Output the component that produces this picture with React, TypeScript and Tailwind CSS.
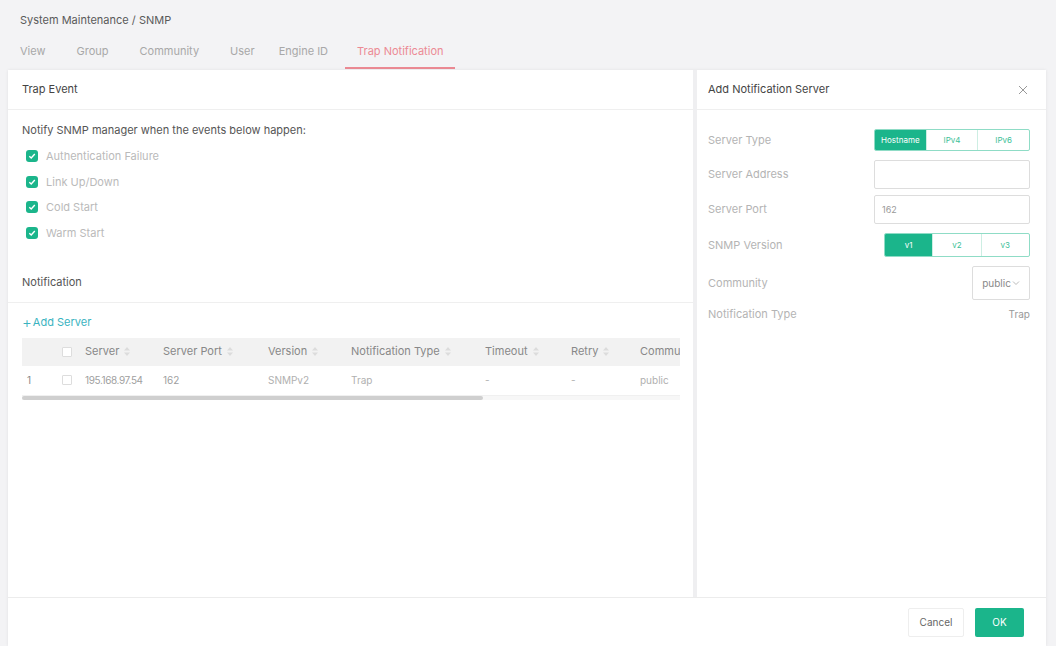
import React from 'react';

const tabs = ['View', 'Group', 'Community', 'User', 'Engine ID', 'Trap Notification'];
const tabGap = ['mr-[31px]', 'mr-[31px]', 'mr-[31px]', 'mr-[24px]', 'mr-[29px]'];
const events = ['Authentication Failure', 'Link Up/Down', 'Cold Start', 'Warm Start'];

const cols = [
  { name: 'Server', w: 'w-[78px]' },
  { name: 'Server Port', w: 'w-[105px]' },
  { name: 'Version', w: 'w-[83px]' },
  { name: 'Notification Type', w: 'w-[134px]' },
  { name: 'Timeout', w: 'w-[86px]' },
  { name: 'Retry', w: 'w-[69px]' },
];

const SortIcon = () => (
  <svg width="6" height="9" viewBox="0 0 6 9" className="ml-[5px] text-[#dcdcdc]">
    <path d="M3 0L6 3.5H0Z" fill="currentColor" />
    <path d="M3 9L0 5.5H6Z" fill="currentColor" />
  </svg>
);

const Check = () => (
  <span className="w-[12px] h-[12px] rounded-[3px] bg-[#1bb58b] flex items-center justify-center">
    <svg width="8" height="8" viewBox="0 0 8 8">
      <path d="M1.3 4.2L3.2 6L6.8 2" stroke="white" strokeWidth="1.4" fill="none" />
    </svg>
  </span>
);

const Segmented = ({ items, w, h }: { items: string[]; w: string; h: string }) => (
  <div className={`flex ${h} ${w} border border-[#8fdcc6] rounded-[2px] overflow-hidden`}>
    {items.map((it, i) => (
      <div
        key={it}
        className={`flex-1 flex items-center justify-center text-[8px] ${i === 0 ? 'bg-[#1bb58b] text-white' : 'text-[#3cbf98] border-l border-[#cdeee3]'}`}
      >
        {it}
      </div>
    ))}
  </div>
);

const FormRow = ({ label, children, h }: { label: string; children?: React.ReactNode; h: string }) => (
  <div className={`flex items-center justify-between ${h}`}>
    <span className="text-[11px] text-[#b4b4b4]">{label}</span>
    {children}
  </div>
);

export default function App() {
  return (
    <div className="w-[1056px] h-[646px] bg-[#f3f3f5] flex flex-col text-[#555]" style={{ fontFamily: 'Inter, "Liberation Sans", sans-serif' }}>
      <div className="h-[70px] px-[20px] pt-[12px]">
        <div className="text-[11px] text-[#5a5a5a] leading-[16px]">System Maintenance / SNMP</div>
        <div className="flex mt-[16px] text-[11px] text-[#a8a8a8] leading-[14px]">
          {tabs.map((t, i) => (
            <div
              key={t}
              className={`pb-[9px] ${i === 5 ? 'text-[#ec8a94] border-b-2 border-[#ec8a94] px-[12px] -ml-[12px]' : tabGap[i]}`}
            >
              {t}
            </div>
          ))}
        </div>
      </div>

      <div className="flex-1 ml-[8px] mr-[10px] bg-white flex flex-col shadow-[0_0_3px_rgba(0,0,0,0.08)]">
        <div className="flex-1 flex">
          {/* left */}
          <div className="w-[685px] flex flex-col">
            <div className="h-[40px] flex items-center px-[14px] text-[11px] text-[#444] border-b border-[#efefef]">Trap Event</div>
            <div className="px-[14px] pt-[12px]">
              <div className="text-[11px] text-[#555]">Notify SNMP manager when the events below happen:</div>
              <div className="mt-[5px] flex flex-col">
                {events.map((e) => (
                  <div key={e} className="flex items-center h-[25.5px] gap-[8px] pl-[4px]">
                    <Check />
                    <span className="text-[11px] text-[#bababa]">{e}</span>
                  </div>
                ))}
              </div>
            </div>
            <div className="mt-[17px] h-[40px] flex items-center px-[14px] text-[11px] text-[#555] border-b border-[#efefef]">Notification</div>
            <div className="px-[14px] pt-[12px]">
              <div className="text-[11px] text-[#3ab3bf] flex items-center h-[16px]">
                <span className="text-[15px] leading-none mr-[1px] font-light">+</span>Add Server
              </div>
              <div className="mt-[7px] w-[658px] overflow-hidden">
                <div className="flex h-[28px] items-center bg-[#f2f2f2] text-[11px] text-[#888]">
                  <div className="w-[40px] shrink-0" />
                  <div className="w-[23px] shrink-0 flex">
                    <span className="w-[10px] h-[10px] border border-[#ddd] bg-white rounded-[1px]" />
                  </div>
                  {cols.map((c) => (
                    <div key={c.name} className={`${c.w} flex items-center shrink-0 whitespace-nowrap`}>
                      {c.name}
                      <SortIcon />
                    </div>
                  ))}
                  <div className="shrink-0 whitespace-nowrap">Community</div>
                </div>
                <div className="flex h-[30px] items-center text-[10px] text-[#b0b0b0] border-b border-[#f0f0f0]">
                  <div className="w-[40px] shrink-0 pl-[5px] text-[#888]">1</div>
                  <div className="w-[23px] shrink-0 flex">
                    <span className="w-[10px] h-[10px] border border-[#ddd] bg-white rounded-[1px]" />
                  </div>
                  <div className="w-[78px] shrink-0 text-[#a0a0a0] tracking-[-0.4px]">195.168.97.54</div>
                  <div className="w-[105px] shrink-0 text-[#a0a0a0]">162</div>
                  <div className="w-[83px] shrink-0">SNMPv2</div>
                  <div className="w-[134px] shrink-0">Trap</div>
                  <div className="w-[86px] shrink-0">-</div>
                  <div className="w-[69px] shrink-0">-</div>
                  <div className="shrink-0">public</div>
                </div>
                <div className="h-[4px] bg-[#f7f7f7]">
                  <div className="w-[461px] h-[4px] bg-[#cfcfcf] rounded-[2px]" />
                </div>
              </div>
            </div>
          </div>

          <div className="w-[4px] bg-[#efeff1]" />

          {/* right */}
          <div className="flex-1 flex flex-col">
            <div className="h-[40px] flex items-center justify-between pl-[11px] pr-[16px] border-b border-[#efefef]">
              <span className="text-[11px] text-[#444]">Add Notification Server</span>
              <svg width="10" height="10" viewBox="0 0 10 10" className="mr-[2px]">
                <path d="M1 1L9 9M9 1L1 9" stroke="#999" strokeWidth="1" />
              </svg>
            </div>
            <div className="pl-[11px] pr-[16px] pt-[19px] flex flex-col">
              <FormRow label="Server Type" h="h-[22px]">
                <Segmented items={['Hostname', 'IPv4', 'IPv6']} w="w-[156px]" h="h-[22px]" />
              </FormRow>
              <FormRow label="Server Address" h="h-[29px] mt-[9px]">
                <div className="w-[156px] h-[29px] border border-[#ddd] rounded-[2px]" />
              </FormRow>
              <FormRow label="Server Port" h="h-[29px] mt-[6px]">
                <div className="w-[156px] h-[29px] border border-[#ddd] rounded-[2px] flex items-center px-[7px] text-[9px] text-[#999]">162</div>
              </FormRow>
              <FormRow label="SNMP Version" h="h-[24px] mt-[9px]">
                <Segmented items={['v1', 'v2', 'v3']} w="w-[146px]" h="h-[24px]" />
              </FormRow>
              <FormRow label="Community" h="h-[34px] mt-[9px]">
                <div className="w-[58px] h-[34px] border border-[#ddd] rounded-[2px] flex items-center justify-center text-[10px] text-[#888]">
                  public
                  <svg width="8" height="6" viewBox="0 0 8 6" className="ml-[1px]">
                    <path d="M1 1.5L4 4.5L7 1.5" stroke="#bbb" fill="none" />
                  </svg>
                </div>
              </FormRow>
              <FormRow label="Notification Type" h="h-[28px]">
                <span className="text-[10px] text-[#999]">Trap</span>
              </FormRow>
            </div>
          </div>
        </div>

        <div className="h-[49px] border-t border-[#ececec] flex items-center justify-end gap-[11px] pr-[22px]">
          <div className="w-[56px] h-[29px] border border-[#eee] rounded-[2px] flex items-center justify-center text-[10px] text-[#666]">Cancel</div>
          <div className="w-[49px] h-[29px] bg-[#1bb58b] rounded-[2px] flex items-center justify-center text-[10px] text-white">OK</div>
        </div>
      </div>
    </div>
  );
}
